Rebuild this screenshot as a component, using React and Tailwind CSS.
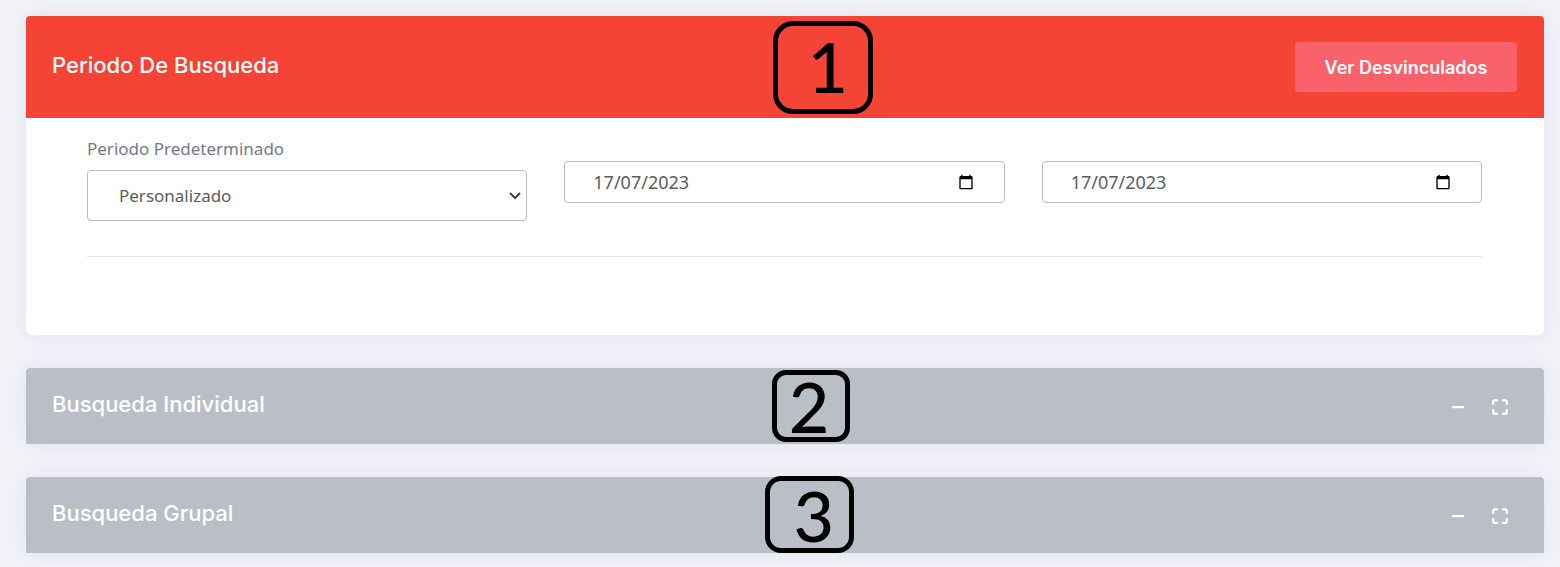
import React, { useState } from "react";
import { Maximize, Minus } from "lucide-react";

const titleClass = "font-['Inter',sans-serif] text-[22px] font-medium leading-7 text-white";

function CalendarIcon() {
  return (
    <svg width="16" height="16" viewBox="0 0 24 24" fill="#000" aria-hidden="true">
      <path d="M20 3h-1V1h-2v2H7V1H5v2H4c-1.100 0-2 .9-2 2v16c0 1.100.9 2 2 2h16c1.100 0 2-.9 2-2V5c0-1.100-.9-2-2-2zm0 18H4V8h16v13z" />
    </svg>
  );
}

function ChevronIcon() {
  return (
    <svg width="12" height="8" viewBox="0 0 12 8" fill="none" stroke="#444" strokeWidth="2" aria-hidden="true">
      <path d="M1 1l5 5 5-5" />
    </svg>
  );
}

function DateField({ label }) {
  const [value, setValue] = useState("17/07/2023");
  return (
    <div className="mt-6 flex h-[42px] items-center rounded border border-[#babbc9] bg-white pr-[30px] pl-[28px]">
      <input
        type="text"
        aria-label={label}
        value={value}
        onChange={(e) => setValue(e.target.value)}
        className="min-w-0 flex-1 bg-transparent text-[18px] leading-6 text-[#5a5d60] outline-none"
      />
      <button type="button" aria-label={"Abrir calendario: " + label}>
        <CalendarIcon />
      </button>
    </div>
  );
}

function SearchCard({ title, children }) {
  return (
    <section className="shadow-[0_0_20px_rgba(80,80,160,0.1)]">
      <header className="relative flex h-[76px] justify-between rounded-t bg-[#b9bec7] pr-[35px] pl-[26px]">
        <h2 className={titleClass + " pt-[22px]"}>{title}</h2>
        <div className="flex items-center gap-[24px] pt-[2px] text-white">
          <button type="button" aria-label="Contraer">
            <Minus size={18} strokeWidth={3} />
          </button>
          <button type="button" aria-label="Maximizar">
            <Maximize size={18} strokeWidth={3} />
          </button>
        </div>
        {children}
      </header>
    </section>
  );
}

const badgeClass =
  "absolute flex items-center justify-center border-[5px] border-black font-['Lato',sans-serif] text-[70px] font-medium leading-none text-black";

export default function App() {
  return (
    <main className="flex flex-col gap-[33px] bg-[#f2f3f8] pt-4 pr-4 pb-[14px] pl-[26px] font-['Noto_Sans',sans-serif]">
      <section className="rounded-md bg-white shadow-[0_0_20px_rgba(80,80,160,0.1)]">
        <header className="relative flex h-[102px] justify-between rounded-t bg-[#f54336] pr-[27px] pl-[26px]">
          <h2 className={titleClass + " pt-[35px]"}>Periodo De Busqueda</h2>
          <button
            type="button"
            className="h-[50px] w-[222px] self-center rounded bg-[#fa626b] font-['Inter',sans-serif] text-[18px] font-semibold text-white"
          >
            Ver Desvinculados
          </button>
          <span className={badgeClass + " top-[5px] left-[49.2%] h-[93px] w-[100px] rounded-[20px] pb-[4px] pl-[10px]"}>1</span>
        </header>
        <div className="pt-[19px] pr-[62px] pb-[78px] pl-[61px]">
          <div className="grid grid-cols-3 gap-x-[37px] border-b border-[#e3e4e8] pb-[35px]">
            <div>
              <label htmlFor="periodo" className="block text-[17px] leading-6 text-[#75798b]">
                Periodo Predeterminado
              </label>
              <div className="relative mt-[9px]">
                <select
                  id="periodo"
                  className="block h-[51px] w-full appearance-none rounded border border-[#babbc9] bg-white pr-8 pl-[31px] text-[17px] text-[#5a5d60]"
                >
                  <option>Personalizado</option>
                </select>
                <span className="pointer-events-none absolute inset-y-0 right-[6px] flex items-center">
                  <ChevronIcon />
                </span>
              </div>
            </div>
            <DateField label="Fecha desde" />
            <DateField label="Fecha hasta" />
          </div>
        </div>
      </section>

      <SearchCard title="Busqueda Individual">
        <span className={badgeClass + " top-[2px] left-[49.15%] h-[72px] w-[78px] rounded-[14px] pr-[4px]"}>2</span>
      </SearchCard>
      <SearchCard title="Busqueda Grupal">
        <span className={badgeClass + " top-[-1px] left-[48.7%] h-[77px] w-[89px] rounded-[16px] pl-[8px]"}>3</span>
      </SearchCard>
    </main>
  );
}
